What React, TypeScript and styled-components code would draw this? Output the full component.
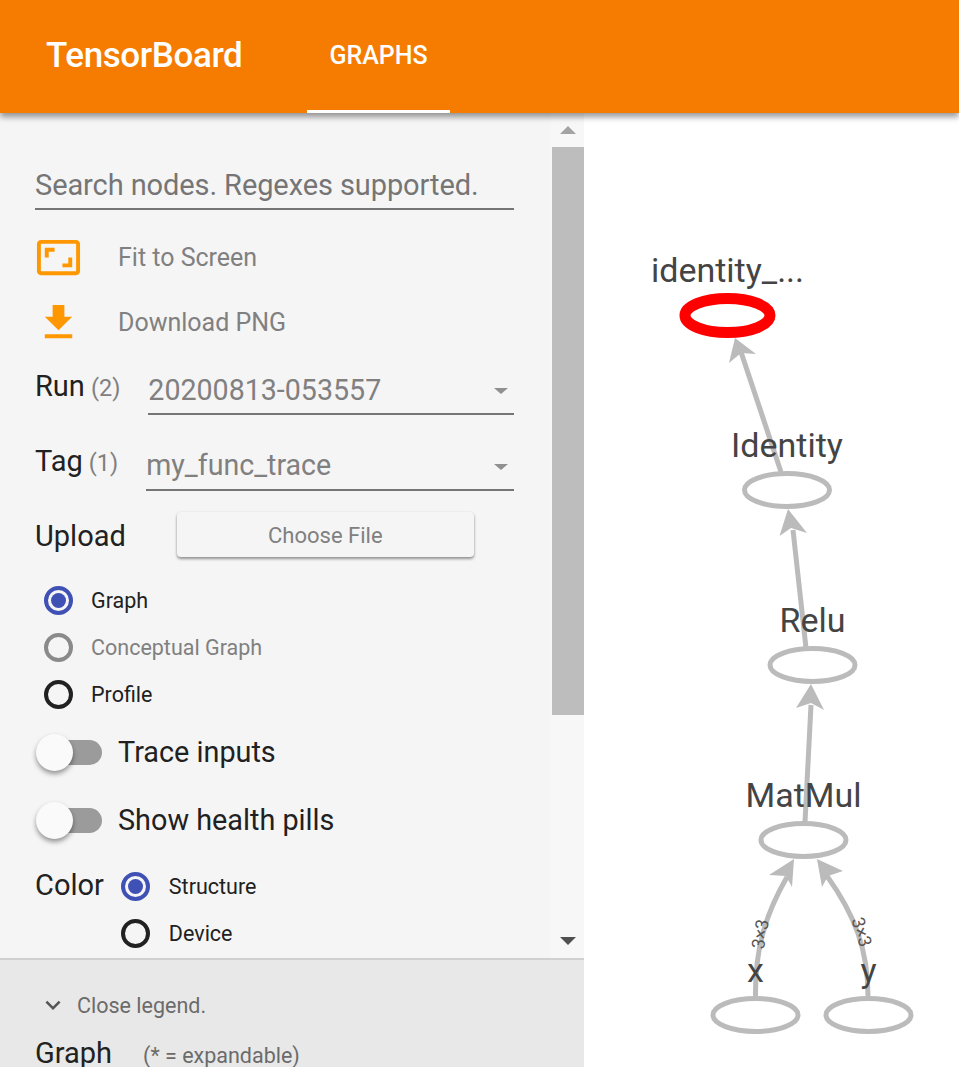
import React from 'react';
import styled, { createGlobalStyle } from 'styled-components';

const Global = createGlobalStyle`
  html, body { margin: 0; padding: 0; height: 100%; overflow: hidden; background: #fff; }
  #root { height: 100%; }
  * { box-sizing: border-box; }
`;

const Page = styled.div`
  height: 1067px;
  display: flex;
  flex-direction: column;
  font-family: Roboto, "Liberation Sans", sans-serif;
  overflow: hidden;
`;

const Header = styled.header`
  height: 113px;
  flex: none;
  display: flex;
  background: #f57c00;
  box-shadow: 0 4px 6px rgba(0, 0, 0, 0.4);
  position: relative;
  z-index: 2;
  padding-left: 46px;
`;

const Brand = styled.div`
  width: 261px;
  font-size: 35px;
  font-weight: 500;
  line-height: 111px;
  letter-spacing: -0.4px;
  color: #fff;
`;

const Tab = styled.div`
  width: 143px;
  text-align: center;
  font-size: 25px;
  font-weight: 500;
  line-height: 111px;
  color: #fff;
  border-bottom: 3px solid #fff;
`;

const Body = styled.main`
  flex: 1;
  min-height: 0;
  display: flex;
`;

const Sidebar = styled.aside`
  width: 584px;
  flex: none;
  display: flex;
  flex-direction: column;
  background: #f5f5f5;
`;

const ScrollArea = styled.div`
  height: 845px;
  flex: none;
  display: flex;
`;

const Controls = styled.div`
  width: 551px;
  flex: none;
  overflow: hidden;
  padding: 50px 37px 0 35px;
`;

const ScrollBar = styled.div`
  flex: 1;
  display: flex;
  flex-direction: column;
  background: #f7f7f7;
`;

const ScrollButton = styled.div`
  height: ${p => p.$h}px;
  flex: none;
  display: flex;
  justify-content: center;
  align-items: ${p => (p.$down ? 'flex-end' : 'flex-start')};
  padding: 13px 0 13px 0;
`;

const Arrow = styled.div`
  width: 0;
  height: 0;
  border-left: 8px solid transparent;
  border-right: 8px solid transparent;
  ${p => (p.$down ? 'border-top: 8px solid #505050;' : 'border-bottom: 8px solid #a3a3a3;')}
`;

const Thumb = styled.div`
  height: 568px;
  flex: none;
  margin-left: 1px;
  background: #bdbdbd;
`;

const ScrollSpacer = styled.div`
  flex: 1;
`;

const SearchField = styled.div`
  height: 47px;
  font-size: 29px;
  line-height: 45px;
  letter-spacing: -0.09px;
  color: #757575;
  border-bottom: 2px solid #757575;
`;

const ActionRow = styled.div`
  height: 65px;
  display: flex;
  align-items: center;
  gap: 36px;
  font-size: 25px;
  color: #808080;
  margin-top: ${p => p.$mt || 0}px;
`;

const ActionIcon = styled.svg`
  width: 47px;
  height: 47px;
  flex: none;
  fill: #ff9800;
`;

const SelectRow = styled.div`
  height: ${p => p.$h}px;
  display: flex;
  gap: 28px;
  margin-top: ${p => p.$mt}px;
`;

const Label = styled.div`
  font-size: 29px;
  line-height: ${p => p.$lh || 62}px;
  color: #212121;
  white-space: nowrap;
`;

const Count = styled.span`
  font-size: 23.5px;
  color: #808080;
  margin-left: 6px;
`;

const Select = styled.div`
  flex: 1;
  display: flex;
  justify-content: space-between;
  align-items: center;
  height: 100%;
  padding: 11px 6px 0 0;
  font-size: 28.6px;
  color: #808080;
  border-bottom: 2px solid #757575;
`;

const Caret = styled.div`
  width: 0;
  height: 0;
  margin-top: 3px;
  border-left: 7px solid transparent;
  border-right: 7px solid transparent;
  border-top: 6px solid #909090;
`;

const UploadRow = styled.div`
  display: flex;
  align-items: flex-start;
  gap: 51px;
  height: 45px;
  margin-top: 21px;
`;

const ChooseButton = styled.div`
  width: 297px;
  height: 45px;
  border-radius: 4px;
  background: #f5f5f5;
  box-shadow: 0 2px 3px rgba(0, 0, 0, 0.4), 0 0 2px rgba(0, 0, 0, 0.08);
  font-size: 22px;
  line-height: 47px;
  text-align: center;
  color: #808080;
`;

const RadioList = styled.div`
  margin: ${p => p.$mt || 0}px 0 0 ${p => p.$ml || 0}px;
`;

const RadioRow = styled.div`
  height: 47px;
  display: flex;
  align-items: center;
  gap: ${p => p.$gap}px;
  font-size: 21.5px;
  color: ${p => (p.$disabled ? '#808080' : '#212121')};
`;

const RadioCircle = styled.div`
  width: 29px;
  height: 29px;
  flex: none;
  border-radius: 50%;
  border: 4px solid ${p => p.$color};
  display: flex;
  align-items: center;
  justify-content: center;
  &::after {
    content: '';
    display: ${p => (p.$on ? 'block' : 'none')};
    width: 15px;
    height: 15px;
    border-radius: 50%;
    background: ${p => p.$color};
  }
`;

const ToggleRow = styled.div`
  height: 68px;
  display: flex;
  align-items: center;
  gap: 16px;
  font-size: 28.8px;
  color: #212121;
`;

const Track = styled.div`
  position: relative;
  width: 57px;
  height: 25px;
  margin-left: 10px;
  flex: none;
  border-radius: 13px;
  background: #9b9b9b;
`;

const Knob = styled.div`
  position: absolute;
  left: -9px;
  top: -6px;
  width: 37px;
  height: 37px;
  border-radius: 50%;
  background: #fafafa;
  box-shadow: 0 3px 5px rgba(0, 0, 0, 0.4);
`;

const ColorRow = styled.div`
  display: flex;
  gap: 17px;
  margin-top: 9px;
`;

const Legend = styled.section`
  flex: 1;
  min-height: 0;
  overflow: hidden;
  background: #e8e8e8;
  border-top: 2px solid #d0d0d0;
  padding: 30px 0 0 35px;
`;

const LegendToggle = styled.div`
  display: flex;
  align-items: center;
  height: 30px;
  margin-left: 3px;
  gap: 9px;
  font-size: 21.5px;
  color: #6b6b6b;
`;

const Chevron = styled.svg`
  width: 30px;
  height: 30px;
  flex: none;
  fill: #555;
`;

const LegendTitle = styled.div`
  display: flex;
  align-items: baseline;
  margin-top: 16px;
  gap: 31px;
  font-size: 29px;
  color: #212121;
`;

const LegendNote = styled.span`
  font-size: 21.5px;
  color: #6b6b6b;
`;

const GraphPane = styled.div`
  flex: 1;
  min-width: 0;
  background: #fff;
`;

const GraphSvg = styled.svg`
  display: block;
  width: 375px;
  height: 954px;
`;

const NodeLabel = styled.text`
  font-family: Roboto, "Liberation Sans", sans-serif;
  font-size: 34px;
  fill: #444;
  text-anchor: middle;
`;

const EdgeLabel = styled.text`
  font-family: Roboto, "Liberation Sans", sans-serif;
  font-size: 18px;
  fill: #555;
  text-anchor: middle;
  dominant-baseline: central;
`;

const Edge = styled.path`
  fill: none;
  stroke: #bbb;
  stroke-width: 5;
`;

const Head = styled.polygon`
  fill: #bbb;
`;

const Node = styled.ellipse`
  fill: #fff;
  stroke: ${p => p.$stroke || '#bbb'};
  stroke-width: ${p => p.$sw || 5};
`;

const Radio = ({ color, on, label, disabled, gap = 18 }: { color: string; on?: boolean; label: string; disabled?: boolean; gap?: number }) => (
  <RadioRow $disabled={disabled} $gap={gap}>
    <RadioCircle $color={color} $on={on} />
    {label}
  </RadioRow>
);

const Toggle = ({ label }: { label: string }) => (
  <ToggleRow>
    <Track><Knob /></Track>
    {label}
  </ToggleRow>
);

const nodes = [
  { label: 'identity_...', cx: 727.5, cy: 315.5, ly: 282, red: true },
  { label: 'Identity', cx: 787, cy: 490, ly: 457 },
  { label: 'Relu', cx: 812.5, cy: 665, ly: 632 },
  { label: 'MatMul', cx: 803.5, cy: 840, ly: 807 },
  { label: 'x', cx: 755.5, cy: 1015, ly: 982 },
  { label: 'y', cx: 868.5, cy: 1015, ly: 982 },
];

export default function App() {
  return (
    <Page>
      <Global />
      <Header>
        <Brand>TensorBoard</Brand>
        <Tab>GRAPHS</Tab>
      </Header>
      <Body>
        <Sidebar>
          <ScrollArea>
            <Controls>
              <SearchField>Search nodes. Regexes supported.</SearchField>
              <ActionRow $mt={15}>
                <ActionIcon viewBox="0 0 24 24">
                  <path d="M19 12h-2v3h-3v2h5v-5zM7 9h3V7H5v5h2V9zm14-6H3c-1.1 0-2 .9-2 2v14c0 1.1.9 2 2 2h18c1.1 0 2-.9 2-2V5c0-1.1-.9-2-2-2zm0 16.01H3V4.99h18v14.02z" />
                </ActionIcon>
                Fit to Screen
              </ActionRow>
              <ActionRow>
                <ActionIcon viewBox="0 0 24 24">
                  <path d="M19 9h-4V3H9v6H5l7 7 7-7zM5 18v2h14v-2H5z" />
                </ActionIcon>
                Download PNG
              </ActionRow>
              <SelectRow $h={60} $mt={0}>
                <Label>Run<Count>(2)</Count></Label>
                <Select>
                  20200813-053557
                  <Caret />
                </Select>
              </SelectRow>
              <SelectRow $h={61} $mt={15}>
                <Label>Tag<Count>(1)</Count></Label>
                <Select>
                  my_func_trace
                  <Caret />
                </Select>
              </SelectRow>
              <UploadRow>
                <Label $lh={49}>Upload</Label>
                <ChooseButton>Choose File</ChooseButton>
              </UploadRow>
              <RadioList $mt={20} $ml={9}>
                <Radio color="#3f51b5" on label="Graph" />
                <Radio color="#8a8a8a" label="Conceptual Graph" disabled />
                <Radio color="#212121" label="Profile" />
              </RadioList>
              <Toggle label="Trace inputs" />
              <Toggle label="Show health pills" />
              <ColorRow>
                <Label $lh={44}>Color</Label>
                <RadioList>
                  <Radio color="#3f51b5" on label="Structure" gap={19} />
                  <Radio color="#212121" label="Device" gap={19} />
                </RadioList>
              </ColorRow>
            </Controls>
            <ScrollBar>
              <ScrollButton $h={34}><Arrow /></ScrollButton>
              <Thumb />
              <ScrollSpacer />
              <ScrollButton $h={34} $down><Arrow $down /></ScrollButton>
            </ScrollBar>
          </ScrollArea>
          <Legend>
            <LegendToggle>
              <Chevron viewBox="0 0 24 24">
                <path d="M16.59 8.59 12 13.17 7.41 8.59 6 10l6 6 6-6z" />
              </Chevron>
              Close legend.
            </LegendToggle>
            <LegendTitle>
              Graph
              <LegendNote>(* = expandable)</LegendNote>
            </LegendTitle>
          </Legend>
        </Sidebar>
        <GraphPane>
          <GraphSvg viewBox="584 113 375 954">
            <Edge d="M781 472 L741 352" />
            <Head points="735,338 729,363 741,353 756,354" />
            <Edge d="M806 648 L793 530" />
            <Head points="788,509 779.5,536 791,528 807,533" />
            <Edge d="M805 822 L811 705" />
            <Head points="811,684 796,708 811,703 824,710" />
            <Edge d="M755.5 996 C755 950 765 915 787 877" />
            <Head points="794,859 769,875 786,876 792,887" />
            <Edge d="M868 996 C868 950 855 915 827 876" />
            <Head points="817,859 843,871 828,876 822,887" />
            <EdgeLabel transform="translate(760 934) rotate(-80)">3×3</EdgeLabel>
            <EdgeLabel transform="translate(862 932) rotate(72)">3×3</EdgeLabel>
            {nodes.map(n => (
              <React.Fragment key={n.label}>
                <Node
                  cx={n.cx}
                  cy={n.cy}
                  rx={42.5}
                  ry={n.red ? 17 : 16.5}
                  $stroke={n.red ? '#ff0000' : undefined}
                  $sw={n.red ? 11 : 5}
                />
                <NodeLabel x={n.cx} y={n.ly}>{n.label}</NodeLabel>
              </React.Fragment>
            ))}
          </GraphSvg>
        </GraphPane>
      </Body>
    </Page>
  );
}
